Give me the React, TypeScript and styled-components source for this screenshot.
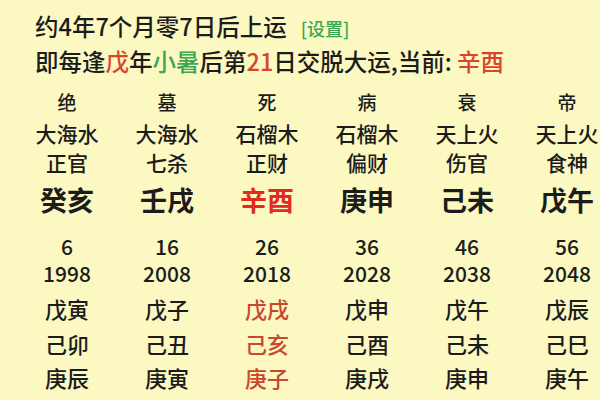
import styled, { createGlobalStyle } from "styled-components";

const GlobalStyle = createGlobalStyle`
  html, body {
    margin: 0;
    padding: 0;
    background: #fbf8c2;
  }
  body {
    font-family: "Noto Sans CJK SC", "Noto Sans", sans-serif;
    font-weight: 500;
    color: #1c1c1c;
    overflow: hidden;
  }
`;

interface iCol {
  changsheng: string;
  nayin: string;
  shishen: string;
  dayun: string;
  age: number;
  year: number;
  liunian: string[];
  current?: boolean;
}

const cols: iCol[] = [
  { changsheng: "绝", nayin: "大海水", shishen: "正官", dayun: "癸亥", age: 6, year: 1998, liunian: ["戊寅", "己卯", "庚辰", "辛巳"] },
  { changsheng: "墓", nayin: "大海水", shishen: "七杀", dayun: "壬戌", age: 16, year: 2008, liunian: ["戊子", "己丑", "庚寅", "辛卯"] },
  { changsheng: "死", nayin: "石榴木", shishen: "正财", dayun: "辛酉", age: 26, year: 2018, liunian: ["戊戌", "己亥", "庚子", "辛丑"], current: true },
  { changsheng: "病", nayin: "石榴木", shishen: "偏财", dayun: "庚申", age: 36, year: 2028, liunian: ["戊申", "己酉", "庚戌", "辛亥"] },
  { changsheng: "衰", nayin: "天上火", shishen: "伤官", dayun: "己未", age: 46, year: 2038, liunian: ["戊午", "己未", "庚申", "辛酉"] },
  { changsheng: "帝", nayin: "天上火", shishen: "食神", dayun: "戊午", age: 56, year: 2048, liunian: ["戊辰", "己巳", "庚午", "辛未"] },
];

const App = () => {
  return (
    <>
      <GlobalStyle />
      <Page>
        <Header>
          <Line>
            约4年7个月零7日后上运<Setting>[设置]</Setting>
          </Line>
          <Line>
            即每逢<Red>戊</Red>年<Green>小暑</Green>后第<Red>21</Red>日交脱大运,当前:{" "}
            <Red>辛酉</Red>
          </Line>
        </Header>
        <Table>
          <Row $h={28} $mt={0} $size={19}>
            {cols.map((c) => (
              <Cell key={c.age}>{c.changsheng}</Cell>
            ))}
          </Row>
          <Row $h={28} $mt={3} $size={21}>
            {cols.map((c) => (
              <Cell key={c.age}>{c.nayin}</Cell>
            ))}
          </Row>
          <Row $h={28} $mt={1} $size={21}>
            {cols.map((c) => (
              <Cell key={c.age}>{c.shishen}</Cell>
            ))}
          </Row>
          <Row $h={36} $mt={6} $size={27} $bold>
            {cols.map((c) => (
              <Cell key={c.age} $tone={c.current ? "strong" : undefined}>
                {c.dayun}
              </Cell>
            ))}
          </Row>
          <Row $h={26} $mt={15} $size={21}>
            {cols.map((c) => (
              <Cell key={c.age}>{c.age}</Cell>
            ))}
          </Row>
          <Row $h={28} $mt={0} $size={21}>
            {cols.map((c) => (
              <Cell key={c.age}>{c.year}</Cell>
            ))}
          </Row>
          {[5, 3, 2, 3].map((mt, i) => (
            <Row key={i} $h={32} $mt={mt} $size={22}>
              {cols.map((c) => (
                <Cell key={c.age} $tone={c.current ? "soft" : undefined}>
                  {c.liunian[i]}
                </Cell>
              ))}
            </Row>
          ))}
        </Table>
      </Page>
    </>
  );
};
export default App;

const Page = styled.div`
  width: 600px;
  height: 400px;
  overflow: hidden;
`;

const Header = styled.div`
  padding: 10px 0 0 35px;
  display: flex;
  flex-direction: column;
`;

const Line = styled.div`
  font-size: 23.5px;
  line-height: 33px;
  white-space: nowrap;
`;

const Setting = styled.span`
  margin-left: 14px;
  font-size: 18px;
  color: #3aa655;
`;

const Red = styled.span`
  color: #d9452b;
`;

const Green = styled.span`
  color: #3aa655;
`;

const Table = styled.div`
  margin-top: 10px;
  padding-left: 17px;
  display: flex;
  flex-direction: column;
`;

const Row = styled.div<{ $h: number; $mt: number; $size: number; $bold?: boolean }>`
  display: grid;
  grid-template-columns: repeat(6, 100px);
  height: ${(p) => p.$h}px;
  line-height: ${(p) => p.$h}px;
  margin-top: ${(p) => p.$mt}px;
  font-size: ${(p) => p.$size}px;
  font-weight: ${(p) => (p.$bold ? 700 : 500)};
`;

const Cell = styled.div<{ $tone?: "strong" | "soft" }>`
  text-align: center;
  white-space: nowrap;
  color: ${(p) =>
    p.$tone === "strong" ? "#e02b20" : p.$tone === "soft" ? "#c9472e" : "#1c1c1c"};
`;
